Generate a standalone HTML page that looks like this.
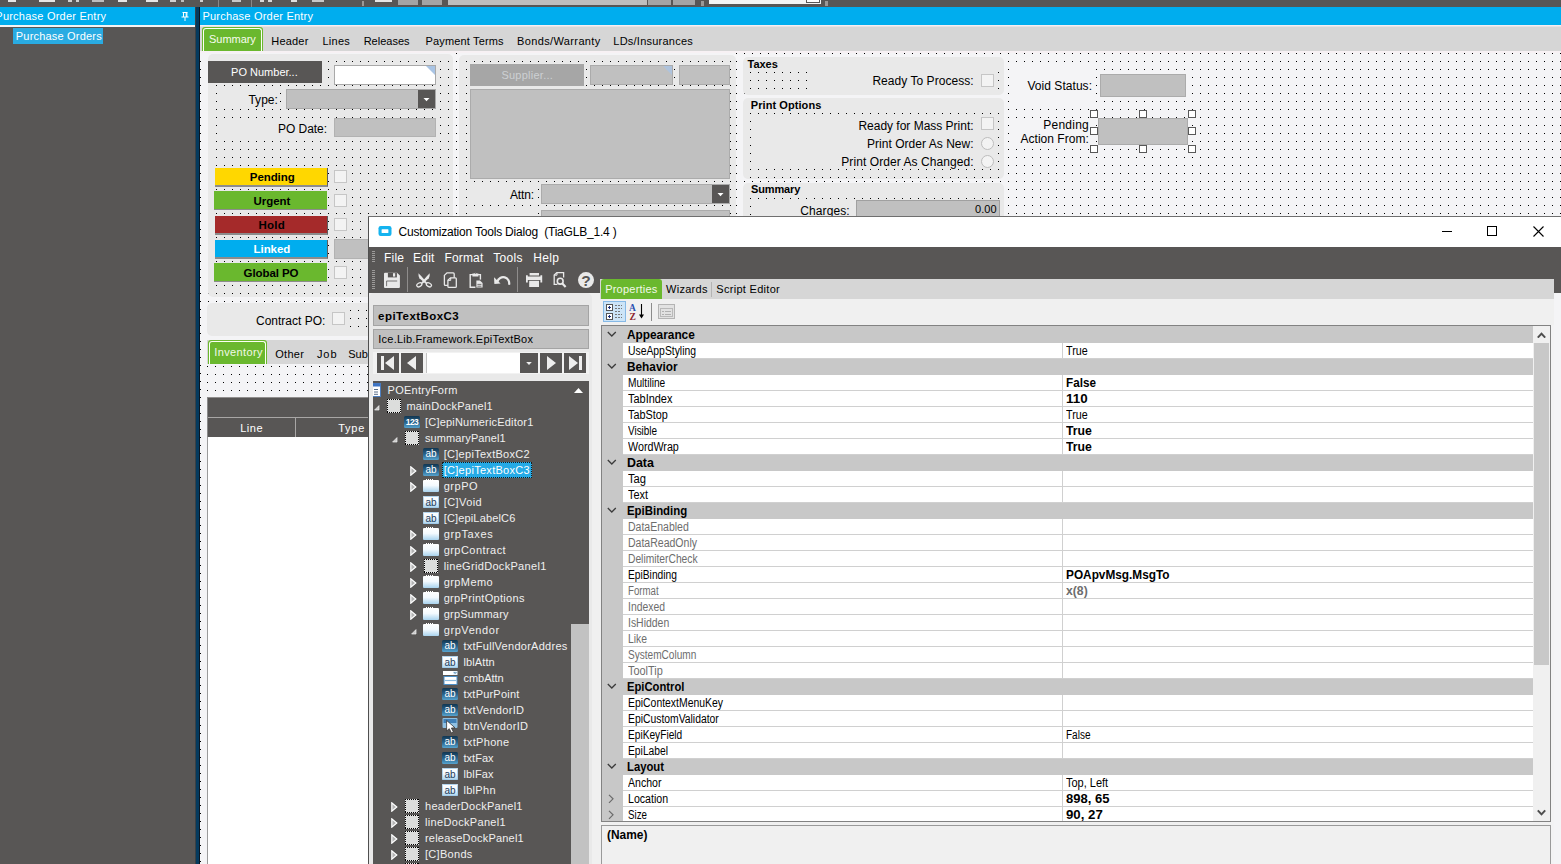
<!DOCTYPE html>
<html lang="en"><head><meta charset="utf-8"><title>Purchase Order Entry</title><style>
html,body{margin:0;padding:0;background:#585655;}
body{width:1561px;height:864px;overflow:hidden;position:relative;font-family:"Liberation Sans", sans-serif;font-size:12px;}
#root{position:absolute;left:0;top:0;width:1561px;height:864px;overflow:hidden;background:#585655;}
#root div,#root span,#root svg{position:absolute;box-sizing:border-box;}
#root span.t{white-space:pre;line-height:16px;height:16px;}
#root span.b{font-weight:bold;}
</style></head><body><div id="root">
<div style="left:0px;top:0px;width:1561px;height:7px;background:#585655;"></div>
<div style="left:8px;top:0px;width:8px;height:2px;background:#e6e6e6;"></div>
<div style="left:39px;top:0px;width:16px;height:2px;background:#e6e6e6;"></div>
<div style="left:68px;top:0px;width:4px;height:2px;background:#d0d0d0;"></div>
<div style="left:76px;top:0px;width:3px;height:2px;background:#d0d0d0;"></div>
<div style="left:92px;top:0px;width:12px;height:2px;background:#bdbdbd;"></div>
<div style="left:118px;top:0px;width:9px;height:2px;background:#e6e6e6;"></div>
<div style="left:146px;top:0px;width:12px;height:2px;background:#e6e6e6;"></div>
<div style="left:170px;top:0px;width:6px;height:2px;background:#d0d0d0;"></div>
<div style="left:181px;top:0px;width:3px;height:2px;background:#bdbdbd;"></div>
<div style="left:200px;top:0px;width:3px;height:2px;background:#cfcfcf;"></div>
<div style="left:232px;top:0px;width:9px;height:2px;background:#c8c8c8;"></div>
<div style="left:260px;top:0px;width:4px;height:2px;background:#d8d8d8;"></div>
<div style="left:268px;top:0px;width:4px;height:2px;background:#d8d8d8;"></div>
<div style="left:291px;top:0px;width:6px;height:2px;background:#e0e0e0;"></div>
<div style="left:312px;top:0px;width:12px;height:2px;background:#c8c8c8;"></div>
<div style="left:375px;top:0px;width:9px;height:2px;background:#e6e6e6;"></div>
<div style="left:384px;top:0px;width:8px;height:2px;background:#e6e6e6;"></div>
<div style="left:218px;top:0px;width:1px;height:7px;background:#8a8887;"></div>
<div style="left:251px;top:0px;width:1px;height:7px;background:#8a8887;"></div>
<div style="left:362px;top:1px;width:2px;height:5px;background:#9a9897;"></div>
<div style="left:398px;top:0px;width:20px;height:5px;background:#a4a4a4;"></div>
<div style="left:422px;top:0px;width:20px;height:5px;background:#a4a4a4;"></div>
<div style="left:448px;top:0px;width:199px;height:5px;background:#bebebe;"></div>
<div style="left:648px;top:0px;width:23px;height:5px;background:#a4a4a4;"></div>
<div style="left:673px;top:0px;width:22px;height:5px;background:#a4a4a4;"></div>
<div style="left:701px;top:1px;width:3px;height:5px;background:#9a9897;"></div>
<div style="left:709px;top:0px;width:112px;height:4px;background:#f4f4f4;"></div>
<div style="left:806px;top:0px;width:14px;height:3px;background:#ffffff;border:1px solid #585655;border-top:0;"></div>
<div style="left:825px;top:1px;width:3px;height:5px;background:#9a9897;"></div>
<div style="left:0px;top:7px;width:195px;height:18px;background:#00adee;"></div>
<div style="left:0px;top:25px;width:195px;height:2px;background:#f4f4f4;"></div>
<div style="left:0px;top:27px;width:195px;height:837px;background:#585655;"></div>
<span class="t" style="left:-4.70px;top:8px;font-size:11px;color:#fff;letter-spacing:0.228px;">Purchase Order Entry</span>
<svg style="left:181px;top:12px" width="8" height="9" viewBox="0 0 8 9"><path d="M1.5 0.5h5M2.5 0.5v4.5M5.2 0.5v4.5M5.9 0.5v4.5M0.5 5h7M4 5v4" stroke="#fff" stroke-width="1" fill="none"/></svg>
<div style="left:13px;top:28px;width:90px;height:16px;background:#29abe2;"></div>
<span class="t" style="left:15.80px;top:28px;font-size:11px;color:#fff;letter-spacing:0.196px;">Purchase Orders</span>
<div style="left:195px;top:7px;width:1px;height:857px;background:#3a4044;"></div>
<div style="left:196px;top:7px;width:3px;height:857px;background:#043a5e;"></div>
<div style="left:199px;top:7px;width:1px;height:857px;background:#0a1622;"></div>
<div style="left:200px;top:7px;width:1361px;height:18px;background:#00adee;"></div>
<span class="t" style="left:202.40px;top:8px;font-size:11px;color:#fff;letter-spacing:0.222px;">Purchase Order Entry</span>
<div style="left:200px;top:25px;width:1361px;height:26px;background:#d6d6d6;"></div>
<div style="left:200px;top:25px;width:1361px;height:1px;background:#f6eef2;"></div>
<div style="left:200px;top:26px;width:1361px;height:1px;background:#e6e2e4;"></div>
<div style="left:200px;top:51px;width:1361px;height:2px;background:#f7f1f4;"></div>
<div style="left:202px;top:27px;width:61px;height:24px;background:#6ab82e;border-radius:3px 3px 0 0;"></div>
<div style="left:203px;top:28px;width:59px;height:23px;border:1px solid #fbfff4;border-bottom:0;border-radius:3px 3px 0 0;"></div>
<span class="t" style="left:209.10px;top:31px;font-size:11px;color:#f8fcee;letter-spacing:-0.060px;">Summary</span>
<span class="t" style="left:271.30px;top:33px;font-size:11px;color:#000;letter-spacing:0.184px;">Header</span>
<span class="t" style="left:322.50px;top:33px;font-size:11px;color:#000;letter-spacing:0.251px;">Lines</span>
<span class="t" style="left:363.70px;top:33px;font-size:11px;color:#000;letter-spacing:-0.008px;">Releases</span>
<span class="t" style="left:425.50px;top:33px;font-size:11px;color:#000;letter-spacing:0.157px;">Payment Terms</span>
<span class="t" style="left:517.00px;top:33px;font-size:11px;color:#000;letter-spacing:0.372px;">Bonds/Warranty</span>
<span class="t" style="left:613.30px;top:33px;font-size:11px;color:#000;letter-spacing:0.236px;">LDs/Insurances</span>
<div style="left:200px;top:53px;width:1361px;height:811px;background:linear-gradient(90deg,transparent 1px,#f4f4f6 1px) 0px 0px/8px 8px,linear-gradient(180deg,#000 1px,#f4f4f6 1px) 0px 0px/8px 8px;"></div>
<div style="left:200px;top:53px;width:255px;height:1px;background:#f4f4f6;"></div>
<div style="left:208px;top:54px;width:245px;height:243px;background:#e9e9e9;border-radius:5px;"></div>
<div style="left:211px;top:58px;width:240px;height:236px;background:linear-gradient(90deg,transparent 1px,#e9e9e9 1px) 5px 3px/8px 8px,linear-gradient(180deg,#000 1px,#e9e9e9 1px) 5px 3px/8px 8px;"></div>
<div style="left:208px;top:61px;width:114px;height:22px;background:#585655;"></div>
<span class="t" style="left:231.10px;top:64px;font-size:11px;color:#fff;">PO Number...</span>
<div style="left:334px;top:65px;width:102px;height:20px;background:#fff;border:1px solid #a9a9a9;"></div>
<svg style="left:426px;top:66px" width="9" height="9"><path d="M0 0H9V9Z" fill="#a9c4e4"/></svg>
<div style="left:222px;top:91px;width:57px;height:16px;background:#e9e9e9;"></div>
<span class="t" style="left:248.40px;top:92px;font-size:12px;color:#000;letter-spacing:0.035px;">Type:</span>
<div style="left:286px;top:89px;width:150px;height:20px;background:#c0c0c0;border:1px solid #a9a9a9;"></div>
<div style="left:418px;top:90px;width:17px;height:18px;background:#585655;"></div>
<svg style="left:423px;top:98px" width="8" height="4"><path d="M0.5 0H6.5L3.5 3.2Z" fill="#fff"/></svg>
<div style="left:222px;top:120px;width:108px;height:18px;background:#e9e9e9;"></div>
<span class="t" style="left:278.00px;top:121px;font-size:12px;color:#000;letter-spacing:-0.051px;">PO Date:</span>
<div style="left:334px;top:118px;width:102px;height:19px;background:#c0c0c0;border:1px solid #b2b2b2;"></div>
<div style="left:215px;top:168px;width:113px;height:19px;background:#ffd700;border-right:1px solid #5e5e5e;border-bottom:2px solid #8c8c8c;"></div>
<span class="t b" style="left:249.80px;top:169px;font-size:11.5px;color:#000;letter-spacing:-0.079px;">Pending</span>
<div style="left:334px;top:170px;width:13px;height:13px;background:#f3f3f3;border:1px solid #c6c6c6;"></div>
<div style="left:214px;top:191px;width:113px;height:19px;background:#6ab82e;border-bottom:1px solid #8c8c8c;"></div>
<span class="t b" style="left:253.60px;top:193px;font-size:11.5px;color:#000;letter-spacing:-0.072px;">Urgent</span>
<div style="left:334px;top:194px;width:13px;height:13px;background:#f3f3f3;border:1px solid #c6c6c6;"></div>
<div style="left:215px;top:216px;width:113px;height:19px;background:#a52a2a;border-right:1px solid #5e5e5e;border-bottom:2px solid #8c8c8c;"></div>
<span class="t b" style="left:258.40px;top:217px;font-size:11.5px;color:#000;letter-spacing:0.246px;">Hold</span>
<div style="left:334px;top:218px;width:13px;height:13px;background:#f3f3f3;border:1px solid #c6c6c6;"></div>
<div style="left:215px;top:240px;width:113px;height:19px;background:#00adee;border-right:1px solid #5e5e5e;border-bottom:2px solid #8c8c8c;"></div>
<span class="t b" style="left:253.60px;top:241px;font-size:11.5px;color:#fff;letter-spacing:-0.072px;">Linked</span>
<div style="left:214px;top:263px;width:113px;height:19px;background:#6ab82e;border-bottom:1px solid #8c8c8c;"></div>
<span class="t b" style="left:243.60px;top:265px;font-size:11.5px;color:#000;letter-spacing:-0.087px;">Global PO</span>
<div style="left:334px;top:266px;width:13px;height:13px;background:#f3f3f3;border:1px solid #c6c6c6;"></div>
<div style="left:334px;top:239px;width:60px;height:20px;background:#c0c0c0;border:1px solid #b2b2b2;"></div>
<div style="left:207px;top:303px;width:200px;height:33px;background:#e9e9e9;border-radius:5px;"></div>
<div style="left:346px;top:308px;width:30px;height:24px;background:linear-gradient(90deg,transparent 1px,#e9e9e9 1px) 4px 2px/8px 8px,linear-gradient(180deg,#000 1px,#e9e9e9 1px) 4px 2px/8px 8px;"></div>
<span class="t" style="left:256.00px;top:313px;font-size:12px;color:#000;letter-spacing:-0.005px;">Contract PO:</span>
<div style="left:332px;top:312px;width:13px;height:13px;background:#f3f3f3;border:1px solid #c6c6c6;"></div>
<div style="left:207px;top:364px;width:170px;height:33px;background:linear-gradient(90deg,transparent 1px,#f4f4f6 1px) 0px 2px/8px 8px,linear-gradient(180deg,#000 1px,#f4f4f6 1px) 0px 2px/8px 8px;"></div>
<div style="left:207px;top:340px;width:200px;height:24px;background:#d6d6d6;"></div>
<div style="left:208px;top:340px;width:59px;height:24px;background:#6ab82e;border-radius:3px 3px 0 0;"></div>
<div style="left:209px;top:341px;width:57px;height:23px;border:1px solid #fbfff4;border-bottom:0;border-radius:3px 3px 0 0;"></div>
<span class="t" style="left:214.20px;top:344px;font-size:11px;color:#f2f8e8;letter-spacing:0.394px;">Inventory</span>
<span class="t" style="left:275.20px;top:346px;font-size:11px;color:#000;letter-spacing:0.296px;">Other</span>
<span class="t" style="left:316.90px;top:346px;font-size:11px;color:#000;letter-spacing:0.975px;">Job</span>
<span class="t" style="left:348.20px;top:346px;font-size:11px;color:#000;letter-spacing:0.011px;">Sub</span>
<div style="left:207px;top:397px;width:200px;height:467px;background:#fff;border-left:1px solid #9a9a9a;"></div>
<div style="left:207px;top:397px;width:200px;height:40px;background:#585655;border-left:1px solid #8a8a8a;border-top:1px solid #908e8d;"></div>
<div style="left:208px;top:417px;width:200px;height:1px;background:#a8a6a5;"></div>
<div style="left:295px;top:418px;width:1px;height:19px;background:#a8a6a5;"></div>
<span class="t" style="left:240.20px;top:420px;font-size:11px;color:#fff;letter-spacing:0.534px;">Line</span>
<span class="t" style="left:338.20px;top:420px;font-size:11px;color:#fff;letter-spacing:0.780px;">Type</span>
<div style="left:459px;top:53px;width:277px;height:3px;background:#f4f4f6;"></div>
<div style="left:459px;top:55px;width:277px;height:170px;background:#e9e9e9;border-radius:5px;"></div>
<div style="left:462px;top:58px;width:272px;height:160px;background:linear-gradient(90deg,transparent 1px,#e9e9e9 1px) 4px 3px/8px 8px,linear-gradient(180deg,#000 1px,#e9e9e9 1px) 4px 3px/8px 8px;"></div>
<div style="left:470px;top:64px;width:114px;height:22px;background:#a6a6a6;"></div>
<span class="t" style="left:501.40px;top:67px;font-size:11px;color:#cdd0d3;letter-spacing:0.248px;">Supplier...</span>
<div style="left:590px;top:65px;width:83px;height:20px;background:#c0c0c0;border:1px solid #ababab;"></div>
<svg style="left:663px;top:66px" width="9" height="9"><path d="M0 0H9V9Z" fill="#aec3dd"/></svg>
<div style="left:679px;top:65px;width:51px;height:20px;background:#c0c0c0;border:1px solid #ababab;"></div>
<div style="left:470px;top:89px;width:260px;height:90px;background:#c0c0c0;border:1px solid #ababab;"></div>
<div style="left:472px;top:186px;width:65px;height:17px;background:#e9e9e9;"></div>
<div style="left:472px;top:210px;width:65px;height:8px;background:#e9e9e9;"></div>
<span class="t" style="left:510.00px;top:187px;font-size:12px;color:#000;letter-spacing:-0.147px;">Attn:</span>
<div style="left:541px;top:184px;width:189px;height:20px;background:#c0c0c0;border:1px solid #ababab;"></div>
<div style="left:712px;top:185px;width:17px;height:18px;background:#585655;"></div>
<svg style="left:717px;top:193px" width="8" height="4"><path d="M0.5 0H6.5L3.5 3.2Z" fill="#fff"/></svg>
<div style="left:541px;top:210px;width:189px;height:20px;background:#c0c0c0;border:1px solid #ababab;"></div>
<div style="left:743px;top:57px;width:261px;height:38px;background:#e9e9e9;border-radius:5px;"></div>
<div style="left:747px;top:70px;width:64px;height:24px;background:linear-gradient(90deg,transparent 1px,#e9e9e9 1px) 3px 2px/8px 8px,linear-gradient(180deg,#000 1px,#e9e9e9 1px) 3px 2px/8px 8px;"></div>
<div style="left:996px;top:70px;width:6px;height:24px;background:linear-gradient(90deg,transparent 1px,#e9e9e9 1px) 2px 2px/8px 8px,linear-gradient(180deg,#000 1px,#e9e9e9 1px) 2px 2px/8px 8px;"></div>
<span class="t b" style="left:747.50px;top:56px;font-size:11px;color:#000;letter-spacing:-0.019px;">Taxes</span>
<span class="t" style="left:872.40px;top:73px;font-size:12px;color:#000;letter-spacing:0.044px;">Ready To Process:</span>
<div style="left:981px;top:74px;width:13px;height:13px;background:#f3f3f3;border:1px solid #c6c6c6;"></div>
<div style="left:743px;top:98px;width:261px;height:81px;background:#e9e9e9;border-radius:5px;"></div>
<div style="left:747px;top:110px;width:254px;height:6px;background:linear-gradient(90deg,transparent 1px,#e9e9e9 1px) 3px 3px/8px 8px,linear-gradient(180deg,#000 1px,#e9e9e9 1px) 3px 3px/8px 8px;"></div>
<div style="left:747px;top:116px;width:8px;height:60px;background:linear-gradient(90deg,transparent 1px,#e9e9e9 1px) 3px 5px/8px 8px,linear-gradient(180deg,#000 1px,#e9e9e9 1px) 3px 5px/8px 8px;"></div>
<div style="left:996px;top:116px;width:6px;height:60px;background:linear-gradient(90deg,transparent 1px,#e9e9e9 1px) 2px 5px/8px 8px,linear-gradient(180deg,#000 1px,#e9e9e9 1px) 2px 5px/8px 8px;"></div>
<div style="left:747px;top:166px;width:254px;height:12px;background:linear-gradient(90deg,transparent 1px,#e9e9e9 1px) 3px 3px/8px 8px,linear-gradient(180deg,#000 1px,#e9e9e9 1px) 3px 3px/8px 8px;"></div>
<span class="t b" style="left:750.80px;top:97px;font-size:11px;color:#000;letter-spacing:0.069px;">Print Options</span>
<span class="t" style="left:858.40px;top:118px;font-size:12px;color:#000;letter-spacing:-0.009px;">Ready for Mass Print:</span>
<div style="left:981px;top:117px;width:13px;height:13px;background:#f3f3f3;border:1px solid #c6c6c6;"></div>
<span class="t" style="left:867.00px;top:136px;font-size:12px;color:#000;letter-spacing:0.032px;">Print Order As New:</span>
<div style="left:981px;top:137px;width:13px;height:13px;background:#f3f3f3;border:1px solid #bdbdbd;border-radius:50%;"></div>
<span class="t" style="left:841.30px;top:154px;font-size:12px;color:#000;letter-spacing:0.071px;">Print Order As Changed:</span>
<div style="left:981px;top:155px;width:13px;height:13px;background:#f3f3f3;border:1px solid #bdbdbd;border-radius:50%;"></div>
<div style="left:743px;top:183px;width:261px;height:60px;background:#e9e9e9;border-radius:5px;"></div>
<div style="left:747px;top:196px;width:254px;height:5px;background:linear-gradient(90deg,transparent 1px,#e9e9e9 1px) 3px 2px/8px 8px,linear-gradient(180deg,#000 1px,#e9e9e9 1px) 3px 2px/8px 8px;"></div>
<div style="left:747px;top:201px;width:8px;height:20px;background:linear-gradient(90deg,transparent 1px,#e9e9e9 1px) 3px 5px/8px 8px,linear-gradient(180deg,#000 1px,#e9e9e9 1px) 3px 5px/8px 8px;"></div>
<span class="t b" style="left:751.00px;top:181px;font-size:11px;color:#000;letter-spacing:-0.140px;">Summary</span>
<span class="t" style="left:800.30px;top:203px;font-size:12px;color:#000;letter-spacing:0.100px;">Charges:</span>
<div style="left:856px;top:200px;width:144px;height:20px;background:#c0c0c0;border:1px solid #a0a0a0;"></div>
<span class="t" style="left:975.10px;top:201px;font-size:11px;color:#000;letter-spacing:0.026px;">0.00</span>
<div style="left:1012px;top:66px;width:82px;height:38px;background:#f4f4f6;"></div>
<span class="t" style="left:1027.40px;top:78px;font-size:12px;color:#000;letter-spacing:0.050px;">Void Status:</span>
<div style="left:1100px;top:74px;width:86px;height:23px;background:#c0c0c0;border:1px solid #ababab;"></div>
<div style="left:1012px;top:120px;width:79px;height:28px;background:#f4f4f6;"></div>
<span class="t" style="left:1043.30px;top:117px;font-size:12px;color:#000;letter-spacing:0.242px;">Pending</span>
<span class="t" style="left:1020.50px;top:131px;font-size:12px;color:#000;letter-spacing:0.026px;">Action From:</span>
<div style="left:1098px;top:118px;width:90px;height:27px;background:#c0c0c0;border:1px solid #ababab;"></div>
<div style="left:1090px;top:110px;width:8px;height:8px;background:#fff;border:1px solid #585858;"></div>
<div style="left:1090px;top:127px;width:8px;height:8px;background:#fff;border:1px solid #585858;"></div>
<div style="left:1090px;top:145px;width:8px;height:8px;background:#fff;border:1px solid #585858;"></div>
<div style="left:1139px;top:110px;width:8px;height:8px;background:#fff;border:1px solid #585858;"></div>
<div style="left:1139px;top:145px;width:8px;height:8px;background:#fff;border:1px solid #585858;"></div>
<div style="left:1188px;top:110px;width:8px;height:8px;background:#fff;border:1px solid #585858;"></div>
<div style="left:1188px;top:127px;width:8px;height:8px;background:#fff;border:1px solid #585858;"></div>
<div style="left:1188px;top:145px;width:8px;height:8px;background:#fff;border:1px solid #585858;"></div>
<svg style="left:0;top:0" width="0" height="0"><defs><linearGradient id="gab" x1="0" y1="0" x2="0" y2="1"><stop offset="0" stop-color="#123650"/><stop offset="0.55" stop-color="#2a6791"/><stop offset="1" stop-color="#57a4cf"/></linearGradient><linearGradient id="ggr" x1="0" y1="0" x2="0" y2="1"><stop offset="0" stop-color="#ffffff"/><stop offset="0.45" stop-color="#f4fafe"/><stop offset="1" stop-color="#a9d3ee"/></linearGradient></defs></svg>
<div style="left:368px;top:216px;width:1193px;height:648px;background:#f0f0f0;"></div>
<div style="left:368px;top:216px;width:1193px;height:1px;background:#6f6f6f;"></div>
<div style="left:368px;top:217px;width:1px;height:647px;background:#4f4f4f;"></div>
<div style="left:369px;top:217px;width:1192px;height:30px;background:#fff;"></div>
<svg style="left:378px;top:225px" width="14" height="12" viewBox="0 0 14 12"><rect x="0.5" y="1" width="13" height="10" rx="2.2" fill="#15b3ef"/><rect x="3.6" y="4.2" width="6.8" height="3.9" rx="0.5" fill="#fff"/></svg>
<span class="t" style="left:398.60px;top:224px;font-size:12px;color:#000;letter-spacing:-0.200px;">Customization Tools Dialog  (TiaGLB_1.4 )</span>
<svg style="left:1442px;top:225px" width="104" height="12" viewBox="0 0 104 12"><path d="M0 6.5H10" stroke="#000" stroke-width="1"/><rect x="45.5" y="1.5" width="9" height="9" fill="none" stroke="#000" stroke-width="1"/><path d="M91.5 1.5L101.5 11.5M101.5 1.5L91.5 11.5" stroke="#000" stroke-width="1.1"/></svg>
<div style="left:369px;top:247px;width:1192px;height:46px;background:#585655;"></div>
<div style="left:372px;top:251px;width:3px;height:1px;background:#9d9b9a;"></div>
<div style="left:372px;top:253px;width:3px;height:1px;background:#9d9b9a;"></div>
<div style="left:372px;top:255px;width:3px;height:1px;background:#9d9b9a;"></div>
<div style="left:372px;top:257px;width:3px;height:1px;background:#9d9b9a;"></div>
<div style="left:372px;top:259px;width:3px;height:1px;background:#9d9b9a;"></div>
<div style="left:372px;top:261px;width:3px;height:1px;background:#9d9b9a;"></div>
<div style="left:372px;top:270px;width:3px;height:1px;background:#9d9b9a;"></div>
<div style="left:372px;top:272px;width:3px;height:1px;background:#9d9b9a;"></div>
<div style="left:372px;top:274px;width:3px;height:1px;background:#9d9b9a;"></div>
<div style="left:372px;top:276px;width:3px;height:1px;background:#9d9b9a;"></div>
<div style="left:372px;top:278px;width:3px;height:1px;background:#9d9b9a;"></div>
<div style="left:372px;top:280px;width:3px;height:1px;background:#9d9b9a;"></div>
<div style="left:372px;top:282px;width:3px;height:1px;background:#9d9b9a;"></div>
<div style="left:372px;top:284px;width:3px;height:1px;background:#9d9b9a;"></div>
<div style="left:372px;top:286px;width:3px;height:1px;background:#9d9b9a;"></div>
<div style="left:372px;top:288px;width:3px;height:1px;background:#9d9b9a;"></div>
<span class="t" style="left:384.10px;top:250px;font-size:12px;color:#fff;letter-spacing:0.185px;">File</span>
<span class="t" style="left:413.00px;top:250px;font-size:12px;color:#fff;letter-spacing:0.238px;">Edit</span>
<span class="t" style="left:444.40px;top:250px;font-size:12px;color:#fff;letter-spacing:0.177px;">Format</span>
<span class="t" style="left:493.30px;top:250px;font-size:12px;color:#fff;letter-spacing:0.296px;">Tools</span>
<span class="t" style="left:533.30px;top:250px;font-size:12px;color:#fff;letter-spacing:0.338px;">Help</span>
<div style="left:407px;top:267px;width:1px;height:25px;background:#8f8d8c;"></div>
<div style="left:517px;top:267px;width:1px;height:25px;background:#8f8d8c;"></div>
<svg style="left:384px;top:272px" width="17" height="17" viewBox="0 0 17 17"><path d="M1 0.8h12l2.9 2.6v11.6a1 1 0 0 1-1 1h-13.9a1 1 0 0 1-1-1v-13.2a1 1 0 0 1 1-1z" fill="#e9e9e9"/><rect x="3.9" y="0.8" width="9" height="4.6" fill="#585655"/><rect x="9" y="1.2" width="2.2" height="3.4" fill="#e9e9e9"/><path d="M2.6 14.2v-5.2h10.6" stroke="#585655" stroke-width="0.8" fill="none"/></svg>
<svg style="left:416px;top:273px" width="17" height="15" viewBox="0 0 17 15"><path d="M2.5 0.3L5.6 3.6L11.2 10L9.6 10.8L3.4 5.2Q2.2 2.6 2.5 0.3Z" fill="#e9e9e9"/><path d="M13.7 0.3L10.6 3.6L5 10L6.6 10.8L12.8 5.2Q14 2.6 13.7 0.3Z" fill="#e9e9e9"/><ellipse cx="3.3" cy="11.8" rx="2.7" ry="1.8" transform="rotate(-28 3.3 11.8)" fill="none" stroke="#e9e9e9" stroke-width="1.3"/><ellipse cx="12.9" cy="11.8" rx="2.7" ry="1.8" transform="rotate(28 12.9 11.8)" fill="none" stroke="#e9e9e9" stroke-width="1.3"/></svg>
<svg style="left:443px;top:272px" width="15" height="17" viewBox="0 0 15 17"><path d="M1.4 3.4L4 0.9H10.2a1 1 0 0 1 1 1V12.4a1 1 0 0 1-1 1H2.4a1 1 0 0 1-1-1Z" fill="none" stroke="#e9e9e9" stroke-width="1.3"/><path d="M4.9 8.2L7.5 5.8H12.3a1 1 0 0 1 1 1V14.4a1 1 0 0 1-1 1H5.9a1 1 0 0 1-1-1Z" fill="#585655" stroke="#e9e9e9" stroke-width="1.3"/><path d="M7.7 6v2.4h-2.6" fill="none" stroke="#e9e9e9" stroke-width="1"/></svg>
<svg style="left:469px;top:271px" width="15" height="18" viewBox="0 0 15 18"><path d="M1.2 3.6H11.4V16.2H1.2Z" fill="none" stroke="#e9e9e9" stroke-width="1.4"/><path d="M3.4 2.4h1.8a1.4 1.4 0 0 1 2.4 0h1.8v3h-6z" fill="#e9e9e9"/><circle cx="6.4" cy="2.2" r="0.6" fill="#585655"/><rect x="6.4" y="8.6" width="8" height="9" fill="#585655"/><path d="M7.4 9.6h3.6l2.6 2.4v4.6h-6.2z" fill="#e9e9e9"/><path d="M8.4 13.4h4M8.4 15.2h4" stroke="#585655" stroke-width="0.8"/></svg>
<svg style="left:494px;top:274px" width="17" height="12" viewBox="0 0 17 12"><path d="M3.4 7.6A6 6 0 0 1 15 10.8" fill="none" stroke="#e9e9e9" stroke-width="2.2"/><path d="M0 3.2L0.4 10.1L6.6 9.6Z" fill="#e9e9e9"/></svg>
<svg style="left:526px;top:273px" width="17" height="15" viewBox="0 0 17 15"><rect x="3.6" y="0" width="9.4" height="2.5" fill="#e9e9e9"/><path d="M0 2.2H1.8V3.6H14.4V2.2H16.2V9.6H14.4V7H1.8V9.6H0Z" fill="#e9e9e9"/><rect x="3.2" y="7.8" width="9.8" height="6.2" fill="#e9e9e9"/></svg>
<svg style="left:553px;top:272px" width="14" height="16" viewBox="0 0 14 16"><path d="M4.4 12.4H1.2V3L3.8 0.7H10.6V5.4" fill="none" stroke="#e9e9e9" stroke-width="1.3"/><path d="M4 0.9V3.2H1.4" fill="none" stroke="#e9e9e9" stroke-width="1"/><circle cx="7.2" cy="9.2" r="2.9" fill="none" stroke="#e9e9e9" stroke-width="1.6"/><path d="M9.4 11.6L12.6 15" stroke="#e9e9e9" stroke-width="2.2"/></svg>
<svg style="left:578px;top:272px" width="17" height="17" viewBox="0 0 17 17"><circle cx="8" cy="8.1" r="8" fill="#e9e9e9"/><text x="8" y="13.8" text-anchor="middle" font-family="Liberation Sans,sans-serif" font-weight="bold" font-size="15.5" fill="#585655">?</text></svg>
<div style="left:369px;top:293px;width:223px;height:571px;background:#e9e9e9;border-radius:5px 5px 0 0;"></div>
<div style="left:373px;top:305px;width:216px;height:21px;background:#c0c0c0;border:1px solid #a4a4a4;"></div>
<span class="t b" style="left:378.10px;top:308px;font-size:11.5px;color:#000;letter-spacing:0.432px;">epiTextBoxC3</span>
<div style="left:373px;top:329px;width:216px;height:20px;background:#c0c0c0;border:1px solid #a4a4a4;"></div>
<span class="t" style="left:378.30px;top:331px;font-size:11px;color:#000;letter-spacing:0.224px;">Ice.Lib.Framework.EpiTextBox</span>
<div style="left:373px;top:352px;width:216px;height:22px;background:#f2f2f2;"></div>
<div style="left:377px;top:353px;width:22px;height:20px;background:#585655;"></div>
<div style="left:401px;top:353px;width:22px;height:20px;background:#585655;"></div>
<div style="left:426px;top:353px;width:94px;height:20px;background:#fff;border-left:1px solid #c2c2c2;"></div>
<div style="left:520px;top:353px;width:18px;height:20px;background:#585655;"></div>
<div style="left:540px;top:353px;width:22px;height:20px;background:#585655;"></div>
<div style="left:564px;top:353px;width:22px;height:20px;background:#585655;"></div>
<svg style="left:377px;top:353px" width="22" height="20"><rect x="4" y="3" width="3" height="14" fill="#eeeeee"/><path d="M17 3V17L8 10Z" fill="#eeeeee"/></svg>
<svg style="left:401px;top:353px" width="22" height="20"><path d="M15 3V17L6 10Z" fill="#eeeeee"/></svg>
<svg style="left:520px;top:353px" width="18" height="20"><path d="M6.2 9H11.8L9 12Z" fill="#eeeeee"/></svg>
<svg style="left:540px;top:353px" width="22" height="20"><path d="M7 3V17L16 10Z" fill="#eeeeee"/></svg>
<svg style="left:564px;top:353px" width="22" height="20"><path d="M5 3V17L14 10Z" fill="#eeeeee"/><rect x="15" y="3" width="3" height="14" fill="#eeeeee"/></svg>
<div style="left:373px;top:381px;width:216px;height:483px;background:#585655;"></div>
<div style="left:571px;top:624px;width:17px;height:240px;background:#c2c2c2;"></div>
<svg style="left:574px;top:387px" width="10" height="6"><path d="M0 6L4.5 1L9 6Z" fill="#fff"/></svg>
<svg style="left:373px;top:383px" width="9" height="14"><rect x="-6" y="0.5" width="13.5" height="13" fill="#fff" stroke="#4d7fc0"/><rect x="-6" y="0.5" width="13.5" height="3" fill="#3e74c4"/><path d="M1 6.5h4M1 9h4M1 11.3h4" stroke="#5a6f8a" stroke-width="1"/></svg>
<span class="t" style="left:387.60px;top:382px;font-size:11px;color:#f0f0f0;letter-spacing:0.247px;">POEntryForm</span>
<svg style="left:387px;top:399px" width="14" height="14" shape-rendering="crispEdges"><rect x="0" y="0" width="14" height="14" fill="#e6e6e6"/><rect x="1" y="1" width="12" height="12" fill="#dcdddc"/><path d="M0 0.5H14M0 13.5H14M0.5 0V14M13.5 0V14" stroke="#000" stroke-width="1" stroke-dasharray="1 1"/></svg>
<svg style="left:374px;top:405px" width="6" height="6"><path d="M5 0.6V5H0.6Z" fill="#c9c9c9" stroke="#f4f4f4" stroke-width="0.7"/></svg>
<span class="t" style="left:406.40px;top:398px;font-size:11px;color:#f0f0f0;letter-spacing:0.242px;">mainDockPanel1</span>
<svg style="left:404px;top:416px" width="16" height="12"><rect x="0" y="0" width="16" height="12" rx="1.5" fill="url(#gab)"/><text x="8" y="9.2" text-anchor="middle" font-family="Liberation Sans,sans-serif" font-weight="bold" font-size="8.5" letter-spacing="-0.6" fill="#fff">123</text></svg>
<span class="t" style="left:425.00px;top:414px;font-size:11px;color:#f0f0f0;letter-spacing:0.198px;">[C]epiNumericEditor1</span>
<svg style="left:405px;top:431px" width="14" height="14" shape-rendering="crispEdges"><rect x="0" y="0" width="14" height="14" fill="#e6e6e6"/><rect x="1" y="1" width="12" height="12" fill="#dcdddc"/><path d="M0 0.5H14M0 13.5H14M0.5 0V14M13.5 0V14" stroke="#000" stroke-width="1" stroke-dasharray="1 1"/></svg>
<svg style="left:392px;top:437px" width="6" height="6"><path d="M5 0.6V5H0.6Z" fill="#c9c9c9" stroke="#f4f4f4" stroke-width="0.7"/></svg>
<span class="t" style="left:425.00px;top:430px;font-size:11px;color:#f0f0f0;letter-spacing:0.101px;">summaryPanel1</span>
<svg style="left:423px;top:448px" width="16" height="12"><rect x="0" y="0" width="16" height="12" rx="1.5" fill="url(#gab)"/><text x="8" y="9.3" text-anchor="middle" font-family="Liberation Sans,sans-serif" font-size="10" fill="#fff">ab</text></svg>
<span class="t" style="left:443.70px;top:446px;font-size:11px;color:#f0f0f0;letter-spacing:0.290px;">[C]epiTextBoxC2</span>
<div style="left:442px;top:462px;width:90px;height:16px;background:#25aae6;outline:1px dotted #1b1b1b;outline-offset:-1px;"></div>
<svg style="left:423px;top:464px" width="16" height="12"><rect x="0" y="0" width="16" height="12" rx="1.5" fill="url(#gab)"/><text x="8" y="9.3" text-anchor="middle" font-family="Liberation Sans,sans-serif" font-size="10" fill="#fff">ab</text></svg>
<svg style="left:410px;top:466px" width="7" height="10"><path d="M0.8 0.8V9.2L5.8 5Z" fill="#b4b4b4" stroke="#ffffff" stroke-width="1.2"/></svg>
<span class="t" style="left:443.70px;top:462px;font-size:11px;color:#fff;letter-spacing:0.290px;">[C]epiTextBoxC3</span>
<svg style="left:423px;top:479px" width="16" height="13"><rect x="0" y="1" width="16" height="12" rx="1" fill="url(#ggr)"/><path d="M3 0.5h8" stroke="#fff" stroke-dasharray="1 1"/></svg>
<svg style="left:410px;top:482px" width="7" height="10"><path d="M0.8 0.8V9.2L5.8 5Z" fill="#b4b4b4" stroke="#ffffff" stroke-width="1.2"/></svg>
<span class="t" style="left:443.70px;top:478px;font-size:11px;color:#f0f0f0;letter-spacing:0.526px;">grpPO</span>
<svg style="left:423px;top:496px" width="16" height="13"><rect x="0" y="0" width="16" height="12" rx="1" fill="url(#ggr)"/><rect x="0.5" y="0.5" width="15" height="11" rx="1" fill="none" stroke="#9cc8e8" stroke-width="0.8"/><text x="8" y="9.6" text-anchor="middle" font-family="Liberation Sans,sans-serif" font-size="10" fill="#1e3d5c">ab</text></svg>
<span class="t" style="left:443.70px;top:494px;font-size:11px;color:#f0f0f0;letter-spacing:0.422px;">[C]Void</span>
<svg style="left:423px;top:512px" width="16" height="13"><rect x="0" y="0" width="16" height="12" rx="1" fill="url(#ggr)"/><rect x="0.5" y="0.5" width="15" height="11" rx="1" fill="none" stroke="#9cc8e8" stroke-width="0.8"/><text x="8" y="9.6" text-anchor="middle" font-family="Liberation Sans,sans-serif" font-size="10" fill="#1e3d5c">ab</text></svg>
<span class="t" style="left:443.70px;top:510px;font-size:11px;color:#f0f0f0;letter-spacing:0.157px;">[C]epiLabelC6</span>
<svg style="left:423px;top:527px" width="16" height="13"><rect x="0" y="1" width="16" height="12" rx="1" fill="url(#ggr)"/><path d="M3 0.5h8" stroke="#fff" stroke-dasharray="1 1"/></svg>
<svg style="left:410px;top:530px" width="7" height="10"><path d="M0.8 0.8V9.2L5.8 5Z" fill="#b4b4b4" stroke="#ffffff" stroke-width="1.2"/></svg>
<span class="t" style="left:443.70px;top:526px;font-size:11px;color:#f0f0f0;letter-spacing:0.623px;">grpTaxes</span>
<svg style="left:423px;top:543px" width="16" height="13"><rect x="0" y="1" width="16" height="12" rx="1" fill="url(#ggr)"/><path d="M3 0.5h8" stroke="#fff" stroke-dasharray="1 1"/></svg>
<svg style="left:410px;top:546px" width="7" height="10"><path d="M0.8 0.8V9.2L5.8 5Z" fill="#b4b4b4" stroke="#ffffff" stroke-width="1.2"/></svg>
<span class="t" style="left:443.70px;top:542px;font-size:11px;color:#f0f0f0;letter-spacing:0.452px;">grpContract</span>
<svg style="left:424px;top:559px" width="14" height="14" shape-rendering="crispEdges"><rect x="0" y="0" width="14" height="14" fill="#e6e6e6"/><rect x="1" y="1" width="12" height="12" fill="#dcdddc"/><path d="M0 0.5H14M0 13.5H14M0.5 0V14M13.5 0V14" stroke="#000" stroke-width="1" stroke-dasharray="1 1"/></svg>
<svg style="left:410px;top:562px" width="7" height="10"><path d="M0.8 0.8V9.2L5.8 5Z" fill="#b4b4b4" stroke="#ffffff" stroke-width="1.2"/></svg>
<span class="t" style="left:443.70px;top:558px;font-size:11px;color:#f0f0f0;letter-spacing:0.317px;">lineGridDockPanel1</span>
<svg style="left:423px;top:575px" width="16" height="13"><rect x="0" y="1" width="16" height="12" rx="1" fill="url(#ggr)"/><path d="M3 0.5h8" stroke="#fff" stroke-dasharray="1 1"/></svg>
<svg style="left:410px;top:578px" width="7" height="10"><path d="M0.8 0.8V9.2L5.8 5Z" fill="#b4b4b4" stroke="#ffffff" stroke-width="1.2"/></svg>
<span class="t" style="left:443.70px;top:574px;font-size:11px;color:#f0f0f0;letter-spacing:0.422px;">grpMemo</span>
<svg style="left:423px;top:591px" width="16" height="13"><rect x="0" y="1" width="16" height="12" rx="1" fill="url(#ggr)"/><path d="M3 0.5h8" stroke="#fff" stroke-dasharray="1 1"/></svg>
<svg style="left:410px;top:594px" width="7" height="10"><path d="M0.8 0.8V9.2L5.8 5Z" fill="#b4b4b4" stroke="#ffffff" stroke-width="1.2"/></svg>
<span class="t" style="left:443.70px;top:590px;font-size:11px;color:#f0f0f0;letter-spacing:0.312px;">grpPrintOptions</span>
<svg style="left:423px;top:607px" width="16" height="13"><rect x="0" y="1" width="16" height="12" rx="1" fill="url(#ggr)"/><path d="M3 0.5h8" stroke="#fff" stroke-dasharray="1 1"/></svg>
<svg style="left:410px;top:610px" width="7" height="10"><path d="M0.8 0.8V9.2L5.8 5Z" fill="#b4b4b4" stroke="#ffffff" stroke-width="1.2"/></svg>
<span class="t" style="left:443.70px;top:606px;font-size:11px;color:#f0f0f0;letter-spacing:0.215px;">grpSummary</span>
<svg style="left:423px;top:623px" width="16" height="13"><rect x="0" y="1" width="16" height="12" rx="1" fill="url(#ggr)"/><path d="M3 0.5h8" stroke="#fff" stroke-dasharray="1 1"/></svg>
<svg style="left:411px;top:629px" width="6" height="6"><path d="M5 0.6V5H0.6Z" fill="#c9c9c9" stroke="#f4f4f4" stroke-width="0.7"/></svg>
<span class="t" style="left:443.70px;top:622px;font-size:11px;color:#f0f0f0;letter-spacing:0.579px;">grpVendor</span>
<svg style="left:442px;top:640px" width="16" height="12"><rect x="0" y="0" width="16" height="12" rx="1.5" fill="url(#gab)"/><text x="8" y="9.3" text-anchor="middle" font-family="Liberation Sans,sans-serif" font-size="10" fill="#fff">ab</text></svg>
<span class="t" style="left:463.40px;top:638px;font-size:11px;color:#f0f0f0;letter-spacing:0.269px;">txtFullVendorAddres</span>
<svg style="left:442px;top:656px" width="16" height="13"><rect x="0" y="0" width="16" height="12" rx="1" fill="url(#ggr)"/><rect x="0.5" y="0.5" width="15" height="11" rx="1" fill="none" stroke="#9cc8e8" stroke-width="0.8"/><text x="8" y="9.6" text-anchor="middle" font-family="Liberation Sans,sans-serif" font-size="10" fill="#1e3d5c">ab</text></svg>
<span class="t" style="left:463.40px;top:654px;font-size:11px;color:#f0f0f0;letter-spacing:0.120px;">lblAttn</span>
<svg style="left:442px;top:671px" width="16" height="14"><rect x="1" y="0" width="10" height="4" fill="#fff"/><rect x="11" y="0" width="4.5" height="4" fill="#eaf4fc"/><path d="M11.8 1l1.3 1.5l1.3-1.5" stroke="#2d6fa3" fill="none" stroke-width="0.9"/><rect x="2" y="5.5" width="13" height="8" fill="#fff" stroke="#4d90c8"/><path d="M3 9.5h11" stroke="#8bbbe0" stroke-width="1.2"/></svg>
<span class="t" style="left:463.40px;top:670px;font-size:11px;color:#f0f0f0;letter-spacing:-0.010px;">cmbAttn</span>
<svg style="left:442px;top:688px" width="16" height="12"><rect x="0" y="0" width="16" height="12" rx="1.5" fill="url(#gab)"/><text x="8" y="9.3" text-anchor="middle" font-family="Liberation Sans,sans-serif" font-size="10" fill="#fff">ab</text></svg>
<span class="t" style="left:463.40px;top:686px;font-size:11px;color:#f0f0f0;letter-spacing:0.209px;">txtPurPoint</span>
<svg style="left:442px;top:704px" width="16" height="12"><rect x="0" y="0" width="16" height="12" rx="1.5" fill="url(#gab)"/><text x="8" y="9.3" text-anchor="middle" font-family="Liberation Sans,sans-serif" font-size="10" fill="#fff">ab</text></svg>
<span class="t" style="left:463.40px;top:702px;font-size:11px;color:#f0f0f0;letter-spacing:0.312px;">txtVendorID</span>
<svg style="left:442px;top:718px" width="17" height="16"><rect x="0.5" y="0" width="15" height="10" rx="1" fill="#8fc0e2"/><rect x="1.5" y="1" width="13" height="4" fill="#3f7fb6"/><path d="M4.6 2.4V13L7.3 10.7L9.4 15L11.4 14L9.4 10L13 9.8Z" fill="#fff" stroke="#333" stroke-width="0.8"/></svg>
<span class="t" style="left:463.40px;top:718px;font-size:11px;color:#f0f0f0;letter-spacing:0.344px;">btnVendorID</span>
<svg style="left:442px;top:736px" width="16" height="12"><rect x="0" y="0" width="16" height="12" rx="1.5" fill="url(#gab)"/><text x="8" y="9.3" text-anchor="middle" font-family="Liberation Sans,sans-serif" font-size="10" fill="#fff">ab</text></svg>
<span class="t" style="left:463.40px;top:734px;font-size:11px;color:#f0f0f0;letter-spacing:0.340px;">txtPhone</span>
<svg style="left:442px;top:752px" width="16" height="12"><rect x="0" y="0" width="16" height="12" rx="1.5" fill="url(#gab)"/><text x="8" y="9.3" text-anchor="middle" font-family="Liberation Sans,sans-serif" font-size="10" fill="#fff">ab</text></svg>
<span class="t" style="left:463.40px;top:750px;font-size:11px;color:#f0f0f0;letter-spacing:0.049px;">txtFax</span>
<svg style="left:442px;top:768px" width="16" height="13"><rect x="0" y="0" width="16" height="12" rx="1" fill="url(#ggr)"/><rect x="0.5" y="0.5" width="15" height="11" rx="1" fill="none" stroke="#9cc8e8" stroke-width="0.8"/><text x="8" y="9.6" text-anchor="middle" font-family="Liberation Sans,sans-serif" font-size="10" fill="#1e3d5c">ab</text></svg>
<span class="t" style="left:463.40px;top:766px;font-size:11px;color:#f0f0f0;letter-spacing:0.171px;">lblFax</span>
<svg style="left:442px;top:784px" width="16" height="13"><rect x="0" y="0" width="16" height="12" rx="1" fill="url(#ggr)"/><rect x="0.5" y="0.5" width="15" height="11" rx="1" fill="none" stroke="#9cc8e8" stroke-width="0.8"/><text x="8" y="9.6" text-anchor="middle" font-family="Liberation Sans,sans-serif" font-size="10" fill="#1e3d5c">ab</text></svg>
<span class="t" style="left:463.40px;top:782px;font-size:11px;color:#f0f0f0;letter-spacing:0.324px;">lblPhn</span>
<svg style="left:405px;top:799px" width="14" height="14" shape-rendering="crispEdges"><rect x="0" y="0" width="14" height="14" fill="#e6e6e6"/><rect x="1" y="1" width="12" height="12" fill="#dcdddc"/><path d="M0 0.5H14M0 13.5H14M0.5 0V14M13.5 0V14" stroke="#000" stroke-width="1" stroke-dasharray="1 1"/></svg>
<svg style="left:391px;top:802px" width="7" height="10"><path d="M0.8 0.8V9.2L5.8 5Z" fill="#b4b4b4" stroke="#ffffff" stroke-width="1.2"/></svg>
<span class="t" style="left:425.00px;top:798px;font-size:11px;color:#f0f0f0;letter-spacing:0.261px;">headerDockPanel1</span>
<svg style="left:405px;top:815px" width="14" height="14" shape-rendering="crispEdges"><rect x="0" y="0" width="14" height="14" fill="#e6e6e6"/><rect x="1" y="1" width="12" height="12" fill="#dcdddc"/><path d="M0 0.5H14M0 13.5H14M0.5 0V14M13.5 0V14" stroke="#000" stroke-width="1" stroke-dasharray="1 1"/></svg>
<svg style="left:391px;top:818px" width="7" height="10"><path d="M0.8 0.8V9.2L5.8 5Z" fill="#b4b4b4" stroke="#ffffff" stroke-width="1.2"/></svg>
<span class="t" style="left:425.00px;top:814px;font-size:11px;color:#f0f0f0;letter-spacing:0.328px;">lineDockPanel1</span>
<svg style="left:405px;top:831px" width="14" height="14" shape-rendering="crispEdges"><rect x="0" y="0" width="14" height="14" fill="#e6e6e6"/><rect x="1" y="1" width="12" height="12" fill="#dcdddc"/><path d="M0 0.5H14M0 13.5H14M0.5 0V14M13.5 0V14" stroke="#000" stroke-width="1" stroke-dasharray="1 1"/></svg>
<svg style="left:391px;top:834px" width="7" height="10"><path d="M0.8 0.8V9.2L5.8 5Z" fill="#b4b4b4" stroke="#ffffff" stroke-width="1.2"/></svg>
<span class="t" style="left:425.00px;top:830px;font-size:11px;color:#f0f0f0;letter-spacing:0.207px;">releaseDockPanel1</span>
<svg style="left:405px;top:847px" width="14" height="14" shape-rendering="crispEdges"><rect x="0" y="0" width="14" height="14" fill="#e6e6e6"/><rect x="1" y="1" width="12" height="12" fill="#dcdddc"/><path d="M0 0.5H14M0 13.5H14M0.5 0V14M13.5 0V14" stroke="#000" stroke-width="1" stroke-dasharray="1 1"/></svg>
<svg style="left:391px;top:850px" width="7" height="10"><path d="M0.8 0.8V9.2L5.8 5Z" fill="#b4b4b4" stroke="#ffffff" stroke-width="1.2"/></svg>
<span class="t" style="left:425.00px;top:846px;font-size:11px;color:#f0f0f0;letter-spacing:0.293px;">[C]Bonds</span>
<svg style="left:405px;top:863px" width="14" height="14" shape-rendering="crispEdges"><rect x="0" y="0" width="14" height="14" fill="#e6e6e6"/><rect x="1" y="1" width="12" height="12" fill="#dcdddc"/><path d="M0 0.5H14M0 13.5H14M0.5 0V14M13.5 0V14" stroke="#000" stroke-width="1" stroke-dasharray="1 1"/></svg>
<svg style="left:391px;top:866px" width="7" height="10"><path d="M0.8 0.8V9.2L5.8 5Z" fill="#b4b4b4" stroke="#ffffff" stroke-width="1.2"/></svg>
<span class="t" style="left:425.00px;top:862px;font-size:11px;color:#f0f0f0;letter-spacing:1.335px;">[C]LDs</span>
<div style="left:571px;top:624px;width:18px;height:240px;background:#c2c2c2;"></div>
<div style="left:600px;top:279px;width:954px;height:20px;background:#d6d6d6;"></div>
<div style="left:1554px;top:293px;width:7px;height:571px;background:#f4f4f6;"></div>
<div style="left:1551px;top:299px;width:3px;height:565px;background:#f3f3f4;"></div>
<div style="left:601px;top:279px;width:61px;height:20px;background:#6ab82e;border-radius:3px 3px 0 0;"></div>
<span class="t" style="left:605.20px;top:281px;font-size:11px;color:#f2f8e8;letter-spacing:0.218px;">Properties</span>
<span class="t" style="left:666.00px;top:281px;font-size:11px;color:#000;letter-spacing:0.294px;">Wizards</span>
<div style="left:711px;top:282px;width:1px;height:15px;background:#b4b4b4;"></div>
<span class="t" style="left:716.30px;top:281px;font-size:11px;color:#000;letter-spacing:0.298px;">Script Editor</span>
<div style="left:600px;top:299px;width:954px;height:26px;background:#f0f0f0;"></div>
<div style="left:603px;top:301px;width:23px;height:21px;background:#cce4f7;border:1px solid #86b9e6;"></div>
<svg style="left:606px;top:304px" width="17" height="16"><rect x="0.5" y="0.5" width="6" height="6" fill="#fff" stroke="#555"/><path d="M2 3.5h3M3.5 2v3" stroke="#1c2f7a"/><rect x="0.5" y="9.5" width="6" height="6" fill="#fff" stroke="#555"/><path d="M2 12.5h3M3.5 11v3" stroke="#1c2f7a"/><path d="M9 1.5h7M9 4.5h7M9 7.5h5M9 10.5h7M9 13.5h7" stroke="#777" stroke-dasharray="2 1"/></svg>
<svg style="left:629px;top:303px" width="17" height="18"><text x="0" y="8" font-family="Liberation Serif,serif" font-weight="bold" font-size="9.5" fill="#2a4fb0">A</text><text x="0.5" y="17" font-family="Liberation Serif,serif" font-weight="bold" font-size="9.5" fill="#8a1f2d">Z</text><path d="M12.5 1v13" stroke="#000" stroke-width="1.1"/><path d="M10 11.6h5L12.5 15.4Z" fill="#000"/></svg>
<div style="left:651px;top:303px;width:1px;height:18px;background:#8c8c8c;"></div>
<svg style="left:658px;top:304px" width="17" height="15"><rect x="0.5" y="0.5" width="16" height="14" fill="#e2e2e2" stroke="#b4b4b4"/><rect x="2.5" y="4.5" width="12" height="8" fill="none" stroke="#b9b9b9"/><path d="M4 7.5h2M7 7.5h6M4 10.5h2M7 10.5h6" stroke="#b0b0b0"/></svg>
<div style="left:601px;top:325px;width:950px;height:497px;background:#fff;"></div>
<div style="left:602px;top:326px;width:21px;height:495px;background:#c8c8c8;"></div>
<div style="left:602px;top:326px;width:931px;height:1px;background:#c8c8c8;"></div>
<div style="left:602px;top:327px;width:931px;height:16px;background:#c8c8c8;"></div>
<svg style="left:607px;top:331px" width="10" height="7"><path d="M0.8 1L4.8 5L8.8 1" fill="none" stroke="#3c3c3c" stroke-width="1.3"/></svg>
<span class="t b" style="left:627.20px;top:327px;font-size:12px;color:#000;transform:scaleX(0.9869);transform-origin:0 0;">Appearance</span>
<div style="left:623px;top:358px;width:910px;height:1px;background:#d0d0d0;"></div>
<div style="left:1062px;top:343px;width:1px;height:15px;background:#d0d0d0;"></div>
<span class="t" style="left:627.60px;top:343px;font-size:12px;color:#000;transform:scaleX(0.8638);transform-origin:0 0;">UseAppStyling</span>
<span class="t" style="left:1066.20px;top:343px;font-size:12px;color:#000;transform:scaleX(0.8913);transform-origin:0 0;">True</span>
<div style="left:602px;top:359px;width:931px;height:16px;background:#c8c8c8;"></div>
<svg style="left:607px;top:363px" width="10" height="7"><path d="M0.8 1L4.8 5L8.8 1" fill="none" stroke="#3c3c3c" stroke-width="1.3"/></svg>
<span class="t b" style="left:627.20px;top:359px;font-size:12px;color:#000;transform:scaleX(0.9852);transform-origin:0 0;">Behavior</span>
<div style="left:623px;top:390px;width:910px;height:1px;background:#d0d0d0;"></div>
<div style="left:1062px;top:375px;width:1px;height:15px;background:#d0d0d0;"></div>
<span class="t" style="left:627.60px;top:375px;font-size:12px;color:#000;transform:scaleX(0.8452);transform-origin:0 0;">Multiline</span>
<span class="t b" style="left:1066.20px;top:375px;font-size:12px;color:#000;transform:scaleX(0.9743);transform-origin:0 0;">False</span>
<div style="left:623px;top:406px;width:910px;height:1px;background:#d0d0d0;"></div>
<div style="left:1062px;top:391px;width:1px;height:15px;background:#d0d0d0;"></div>
<span class="t" style="left:627.60px;top:391px;font-size:12px;color:#000;transform:scaleX(0.9116);transform-origin:0 0;">TabIndex</span>
<span class="t b" style="left:1066.20px;top:391px;font-size:12px;color:#000;transform:scaleX(1.1157);transform-origin:0 0;">110</span>
<div style="left:623px;top:422px;width:910px;height:1px;background:#d0d0d0;"></div>
<div style="left:1062px;top:407px;width:1px;height:15px;background:#d0d0d0;"></div>
<span class="t" style="left:627.60px;top:407px;font-size:12px;color:#000;transform:scaleX(0.9036);transform-origin:0 0;">TabStop</span>
<span class="t" style="left:1066.20px;top:407px;font-size:12px;color:#000;transform:scaleX(0.8913);transform-origin:0 0;">True</span>
<div style="left:623px;top:438px;width:910px;height:1px;background:#d0d0d0;"></div>
<div style="left:1062px;top:423px;width:1px;height:15px;background:#d0d0d0;"></div>
<span class="t" style="left:627.60px;top:423px;font-size:12px;color:#000;transform:scaleX(0.8281);transform-origin:0 0;">Visible</span>
<span class="t b" style="left:1066.20px;top:423px;font-size:12px;color:#000;transform:scaleX(1.0219);transform-origin:0 0;">True</span>
<div style="left:623px;top:454px;width:910px;height:1px;background:#d0d0d0;"></div>
<div style="left:1062px;top:439px;width:1px;height:15px;background:#d0d0d0;"></div>
<span class="t" style="left:627.60px;top:439px;font-size:12px;color:#000;transform:scaleX(0.8927);transform-origin:0 0;">WordWrap</span>
<span class="t b" style="left:1066.20px;top:439px;font-size:12px;color:#000;transform:scaleX(1.0219);transform-origin:0 0;">True</span>
<div style="left:602px;top:455px;width:931px;height:16px;background:#c8c8c8;"></div>
<svg style="left:607px;top:459px" width="10" height="7"><path d="M0.8 1L4.8 5L8.8 1" fill="none" stroke="#3c3c3c" stroke-width="1.3"/></svg>
<span class="t b" style="left:627.20px;top:455px;font-size:12px;color:#000;transform:scaleX(1.0340);transform-origin:0 0;">Data</span>
<div style="left:623px;top:486px;width:910px;height:1px;background:#d0d0d0;"></div>
<div style="left:1062px;top:471px;width:1px;height:15px;background:#d0d0d0;"></div>
<span class="t" style="left:627.60px;top:471px;font-size:12px;color:#000;transform:scaleX(0.9349);transform-origin:0 0;">Tag</span>
<div style="left:623px;top:502px;width:910px;height:1px;background:#d0d0d0;"></div>
<div style="left:1062px;top:487px;width:1px;height:15px;background:#d0d0d0;"></div>
<span class="t" style="left:627.60px;top:487px;font-size:12px;color:#000;transform:scaleX(0.9130);transform-origin:0 0;">Text</span>
<div style="left:602px;top:503px;width:931px;height:16px;background:#c8c8c8;"></div>
<svg style="left:607px;top:507px" width="10" height="7"><path d="M0.8 1L4.8 5L8.8 1" fill="none" stroke="#3c3c3c" stroke-width="1.3"/></svg>
<span class="t b" style="left:627.20px;top:503px;font-size:12px;color:#000;transform:scaleX(0.9506);transform-origin:0 0;">EpiBinding</span>
<div style="left:623px;top:534px;width:910px;height:1px;background:#d0d0d0;"></div>
<div style="left:1062px;top:519px;width:1px;height:15px;background:#d0d0d0;"></div>
<span class="t" style="left:627.60px;top:519px;font-size:12px;color:#6d6d6d;transform:scaleX(0.8762);transform-origin:0 0;">DataEnabled</span>
<div style="left:623px;top:550px;width:910px;height:1px;background:#d0d0d0;"></div>
<div style="left:1062px;top:535px;width:1px;height:15px;background:#d0d0d0;"></div>
<span class="t" style="left:627.60px;top:535px;font-size:12px;color:#6d6d6d;transform:scaleX(0.8765);transform-origin:0 0;">DataReadOnly</span>
<div style="left:623px;top:566px;width:910px;height:1px;background:#d0d0d0;"></div>
<div style="left:1062px;top:551px;width:1px;height:15px;background:#d0d0d0;"></div>
<span class="t" style="left:627.60px;top:551px;font-size:12px;color:#6d6d6d;transform:scaleX(0.8555);transform-origin:0 0;">DelimiterCheck</span>
<div style="left:623px;top:582px;width:910px;height:1px;background:#d0d0d0;"></div>
<div style="left:1062px;top:567px;width:1px;height:15px;background:#d0d0d0;"></div>
<span class="t" style="left:627.60px;top:567px;font-size:12px;color:#000;transform:scaleX(0.8523);transform-origin:0 0;">EpiBinding</span>
<span class="t b" style="left:1066.20px;top:567px;font-size:12px;color:#000;transform:scaleX(0.9855);transform-origin:0 0;">POApvMsg.MsgTo</span>
<div style="left:623px;top:598px;width:910px;height:1px;background:#d0d0d0;"></div>
<div style="left:1062px;top:583px;width:1px;height:15px;background:#d0d0d0;"></div>
<span class="t" style="left:627.60px;top:583px;font-size:12px;color:#6d6d6d;transform:scaleX(0.8049);transform-origin:0 0;">Format</span>
<span class="t b" style="left:1066.20px;top:583px;font-size:12px;color:#6d6d6d;transform:scaleX(1.0167);transform-origin:0 0;">x(8)</span>
<div style="left:623px;top:614px;width:910px;height:1px;background:#d0d0d0;"></div>
<div style="left:1062px;top:599px;width:1px;height:15px;background:#d0d0d0;"></div>
<span class="t" style="left:627.60px;top:599px;font-size:12px;color:#6d6d6d;transform:scaleX(0.8664);transform-origin:0 0;">Indexed</span>
<div style="left:623px;top:630px;width:910px;height:1px;background:#d0d0d0;"></div>
<div style="left:1062px;top:615px;width:1px;height:15px;background:#d0d0d0;"></div>
<span class="t" style="left:627.60px;top:615px;font-size:12px;color:#6d6d6d;transform:scaleX(0.8697);transform-origin:0 0;">IsHidden</span>
<div style="left:623px;top:646px;width:910px;height:1px;background:#d0d0d0;"></div>
<div style="left:1062px;top:631px;width:1px;height:15px;background:#d0d0d0;"></div>
<span class="t" style="left:627.60px;top:631px;font-size:12px;color:#6d6d6d;transform:scaleX(0.8630);transform-origin:0 0;">Like</span>
<div style="left:623px;top:662px;width:910px;height:1px;background:#d0d0d0;"></div>
<div style="left:1062px;top:647px;width:1px;height:15px;background:#d0d0d0;"></div>
<span class="t" style="left:627.60px;top:647px;font-size:12px;color:#6d6d6d;transform:scaleX(0.8395);transform-origin:0 0;">SystemColumn</span>
<div style="left:623px;top:678px;width:910px;height:1px;background:#d0d0d0;"></div>
<div style="left:1062px;top:663px;width:1px;height:15px;background:#d0d0d0;"></div>
<span class="t" style="left:627.60px;top:663px;font-size:12px;color:#6d6d6d;transform:scaleX(0.9098);transform-origin:0 0;">ToolTip</span>
<div style="left:602px;top:679px;width:931px;height:16px;background:#c8c8c8;"></div>
<svg style="left:607px;top:683px" width="10" height="7"><path d="M0.8 1L4.8 5L8.8 1" fill="none" stroke="#3c3c3c" stroke-width="1.3"/></svg>
<span class="t b" style="left:627.20px;top:679px;font-size:12px;color:#000;transform:scaleX(0.9359);transform-origin:0 0;">EpiControl</span>
<div style="left:623px;top:710px;width:910px;height:1px;background:#d0d0d0;"></div>
<div style="left:1062px;top:695px;width:1px;height:15px;background:#d0d0d0;"></div>
<span class="t" style="left:627.60px;top:695px;font-size:12px;color:#000;transform:scaleX(0.8683);transform-origin:0 0;">EpiContextMenuKey</span>
<div style="left:623px;top:726px;width:910px;height:1px;background:#d0d0d0;"></div>
<div style="left:1062px;top:711px;width:1px;height:15px;background:#d0d0d0;"></div>
<span class="t" style="left:627.60px;top:711px;font-size:12px;color:#000;transform:scaleX(0.8633);transform-origin:0 0;">EpiCustomValidator</span>
<div style="left:623px;top:742px;width:910px;height:1px;background:#d0d0d0;"></div>
<div style="left:1062px;top:727px;width:1px;height:15px;background:#d0d0d0;"></div>
<span class="t" style="left:627.60px;top:727px;font-size:12px;color:#000;transform:scaleX(0.8465);transform-origin:0 0;">EpiKeyField</span>
<span class="t" style="left:1066.20px;top:727px;font-size:12px;color:#000;transform:scaleX(0.8349);transform-origin:0 0;">False</span>
<div style="left:623px;top:758px;width:910px;height:1px;background:#d0d0d0;"></div>
<div style="left:1062px;top:743px;width:1px;height:15px;background:#d0d0d0;"></div>
<span class="t" style="left:627.60px;top:743px;font-size:12px;color:#000;transform:scaleX(0.8583);transform-origin:0 0;">EpiLabel</span>
<div style="left:602px;top:759px;width:931px;height:16px;background:#c8c8c8;"></div>
<svg style="left:607px;top:763px" width="10" height="7"><path d="M0.8 1L4.8 5L8.8 1" fill="none" stroke="#3c3c3c" stroke-width="1.3"/></svg>
<span class="t b" style="left:627.20px;top:759px;font-size:12px;color:#000;transform:scaleX(0.9404);transform-origin:0 0;">Layout</span>
<div style="left:623px;top:790px;width:910px;height:1px;background:#d0d0d0;"></div>
<div style="left:1062px;top:775px;width:1px;height:15px;background:#d0d0d0;"></div>
<span class="t" style="left:627.60px;top:775px;font-size:12px;color:#000;transform:scaleX(0.8782);transform-origin:0 0;">Anchor</span>
<span class="t" style="left:1066.20px;top:775px;font-size:12px;color:#000;transform:scaleX(0.9146);transform-origin:0 0;">Top, Left</span>
<div style="left:623px;top:806px;width:910px;height:1px;background:#d0d0d0;"></div>
<div style="left:1062px;top:791px;width:1px;height:15px;background:#d0d0d0;"></div>
<span class="t" style="left:627.60px;top:791px;font-size:12px;color:#000;transform:scaleX(0.8837);transform-origin:0 0;">Location</span>
<span class="t b" style="left:1066.20px;top:791px;font-size:12px;color:#000;transform:scaleX(1.0862);transform-origin:0 0;">898, 65</span>
<svg style="left:608px;top:794px" width="7" height="10"><path d="M1 0.8L5 4.8L1 8.8" fill="none" stroke="#6a6a6a" stroke-width="1.2"/></svg>
<div style="left:623px;top:822px;width:910px;height:1px;background:#d0d0d0;"></div>
<div style="left:1062px;top:807px;width:1px;height:15px;background:#d0d0d0;"></div>
<span class="t" style="left:627.60px;top:807px;font-size:12px;color:#000;transform:scaleX(0.8139);transform-origin:0 0;">Size</span>
<span class="t b" style="left:1066.20px;top:807px;font-size:12px;color:#000;transform:scaleX(1.1026);transform-origin:0 0;">90, 27</span>
<svg style="left:608px;top:810px" width="7" height="10"><path d="M1 0.8L5 4.8L1 8.8" fill="none" stroke="#6a6a6a" stroke-width="1.2"/></svg>
<div style="left:1533px;top:326px;width:17px;height:495px;background:#f0f0f0;"></div>
<div style="left:601px;top:822px;width:950px;height:4px;background:#f0f0f0;"></div>
<div style="left:601px;top:325px;width:950px;height:497px;border:1px solid #828282;"></div>
<div style="left:1534px;top:343px;width:15px;height:322px;background:#c8c8c8;"></div>
<svg style="left:1536px;top:331px" width="11" height="7"><path d="M1.8 6.6L5.5 2.6L9.2 6.6" fill="none" stroke="#4e4e4e" stroke-width="2"/></svg>
<svg style="left:1536px;top:809px" width="11" height="7"><path d="M1.8 1.4L5.5 5.4L9.2 1.4" fill="none" stroke="#4e4e4e" stroke-width="2"/></svg>
<div style="left:601px;top:825px;width:950px;height:41px;background:#f0f0f0;border:1px solid #9a9a9a;"></div>
<span class="t b" style="left:607.20px;top:827px;font-size:12px;color:#000;transform:scaleX(0.9929);transform-origin:0 0;">(Name)</span>
</div></body></html>
